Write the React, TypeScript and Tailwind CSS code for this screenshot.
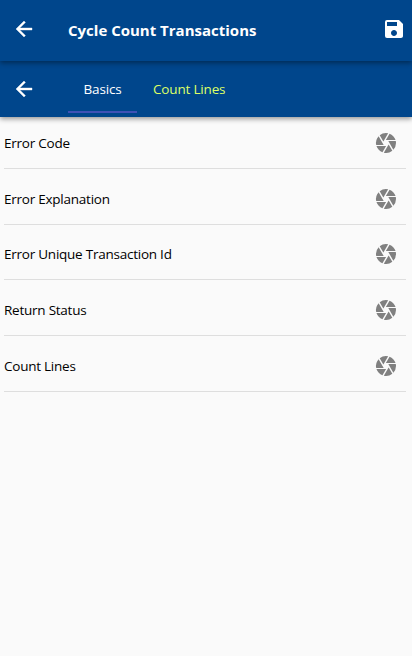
import { MdSave, MdCamera } from "react-icons/md";

const fields = [
  "Error Code",
  "Error Explanation",
  "Error Unique Transaction Id",
  "Return Status",
  "Count Lines",
];

function BackArrow() {
  return (
    <svg width="24" height="24" viewBox="0 0 24 24" className="shrink-0" fill="currentColor" stroke="currentColor" strokeWidth="0.4">
      <path d="M20 11H7.83l5.59-5.59L12 4l-8 8 8 8 1.41-1.41L7.83 13H20v-2z" />
    </svg>
  );
}

export default function App() {
  return (
    <div className="flex h-[656px] w-[412px] flex-col overflow-hidden bg-[#fafafa] font-['Open_Sans','Noto_Sans',sans-serif] text-black">
      <header className="z-20 flex h-[61px] shrink-0 items-center bg-[#00468c] pb-[3px] pl-3 text-white shadow-[0_2px_5px_rgba(0,0,0,0.4)]">
        <BackArrow />
        <h1 className="ml-8 grow pt-[3px] text-[15px] font-bold">Cycle Count Transactions</h1>
        <MdSave size={24} className="mr-[6px]" />
      </header>
      <nav className="z-10 flex h-14 shrink-0 items-center bg-[#00468c] pl-3 text-white shadow-[0_2px_5px_rgba(0,0,0,0.4)]">
        <BackArrow />
        <div className="ml-8 flex h-full pb-1 text-[13.5px] tracking-[-0.17px]">
          <button className="w-[69px] border-b-2 border-[#3f51b5] pt-[6px]">Basics</button>
          <button className="px-4 pt-1 text-[#ddff66]">Count Lines</button>
        </div>
      </nav>
      <main className="-mt-1 pl-1 pr-[6px]">
        {fields.map((field) => (
          <div key={field} className="flex h-[55.75px] items-center justify-between border-b border-[#dedede] pr-2 pt-[5px] text-[13.5px] tracking-[-0.24px]">
            <span>{field}</span>
            <MdCamera size={24} className="text-[#808080]" />
          </div>
        ))}
      </main>
    </div>
  );
}
